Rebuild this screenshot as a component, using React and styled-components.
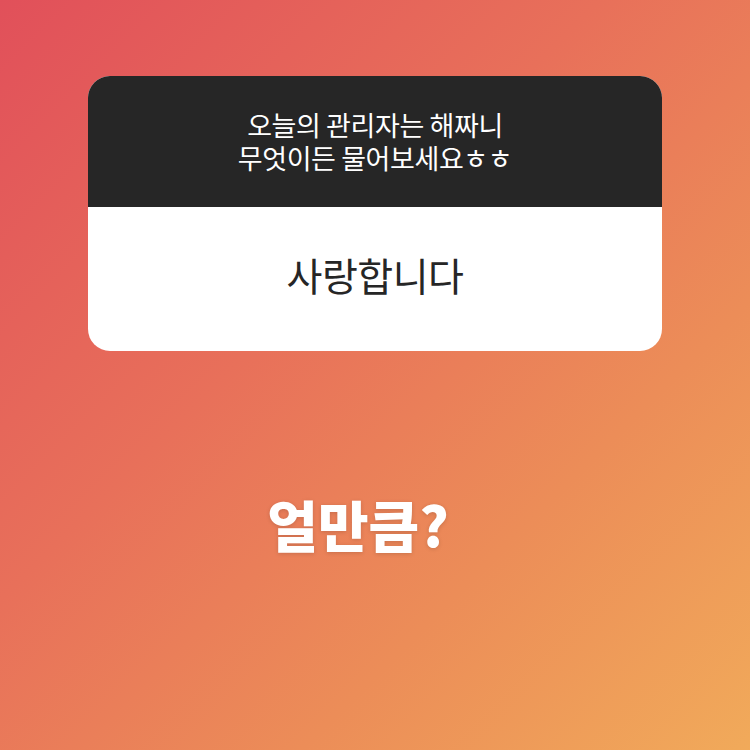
import styled, { createGlobalStyle } from "styled-components";

const GlobalStyle = createGlobalStyle`
  html, body {
    margin: 0;
    padding: 0;
  }
  body {
    font-family: "Noto Sans CJK KR", "Noto Sans", sans-serif;
  }
`;

const Story = () => {
  return (
    <>
      <GlobalStyle />
      <Background>
        <QuestionCard>
          <CardHeader>
            <HeaderText>
              오늘의 관리자는 해짜니
              <br />
              무엇이든 물어보세요ㅎㅎ
            </HeaderText>
          </CardHeader>
          <CardBody>
            <AnswerText>사랑합니다</AnswerText>
          </CardBody>
        </QuestionCard>
        <Caption>얼만큼?</Caption>
      </Background>
    </>
  );
};

const Background = styled.div`
  width: 750px;
  height: 750px;
  box-sizing: border-box;
  padding-top: 76px;
  display: flex;
  flex-direction: column;
  align-items: center;
  background: linear-gradient(
    135deg,
    #e1505a 0%,
    #e8705a 40%,
    #ec8d58 70%,
    #f1aa5a 100%
  );
`;

const QuestionCard = styled.div`
  width: 574px;
  height: 275px;
  border-radius: 22px;
  overflow: hidden;
  display: flex;
  flex-direction: column;
  background: #fff;
`;

const CardHeader = styled.div`
  height: 131px;
  background: #262626;
  display: flex;
  justify-content: center;
  align-items: center;
  padding-bottom: 2px;
  box-sizing: border-box;
`;

const HeaderText = styled.div`
  color: #fff;
  font-size: 27px;
  line-height: 33px;
  letter-spacing: -0.4px;
  text-align: center;
`;

const CardBody = styled.div`
  flex: 1;
  display: flex;
  align-items: center;
  justify-content: center;
  padding-bottom: 10px;
`;

const AnswerText = styled.div`
  color: #262626;
  font-size: 39px;
  letter-spacing: -0.5px;
`;

const Caption = styled.div`
  margin-top: 132px;
  padding-right: 34px;
  color: #fff;
  font-size: 55px;
  font-weight: 900;
  text-shadow: 0 1px 4px rgba(0, 0, 0, 0.15);
`;

export default Story;
